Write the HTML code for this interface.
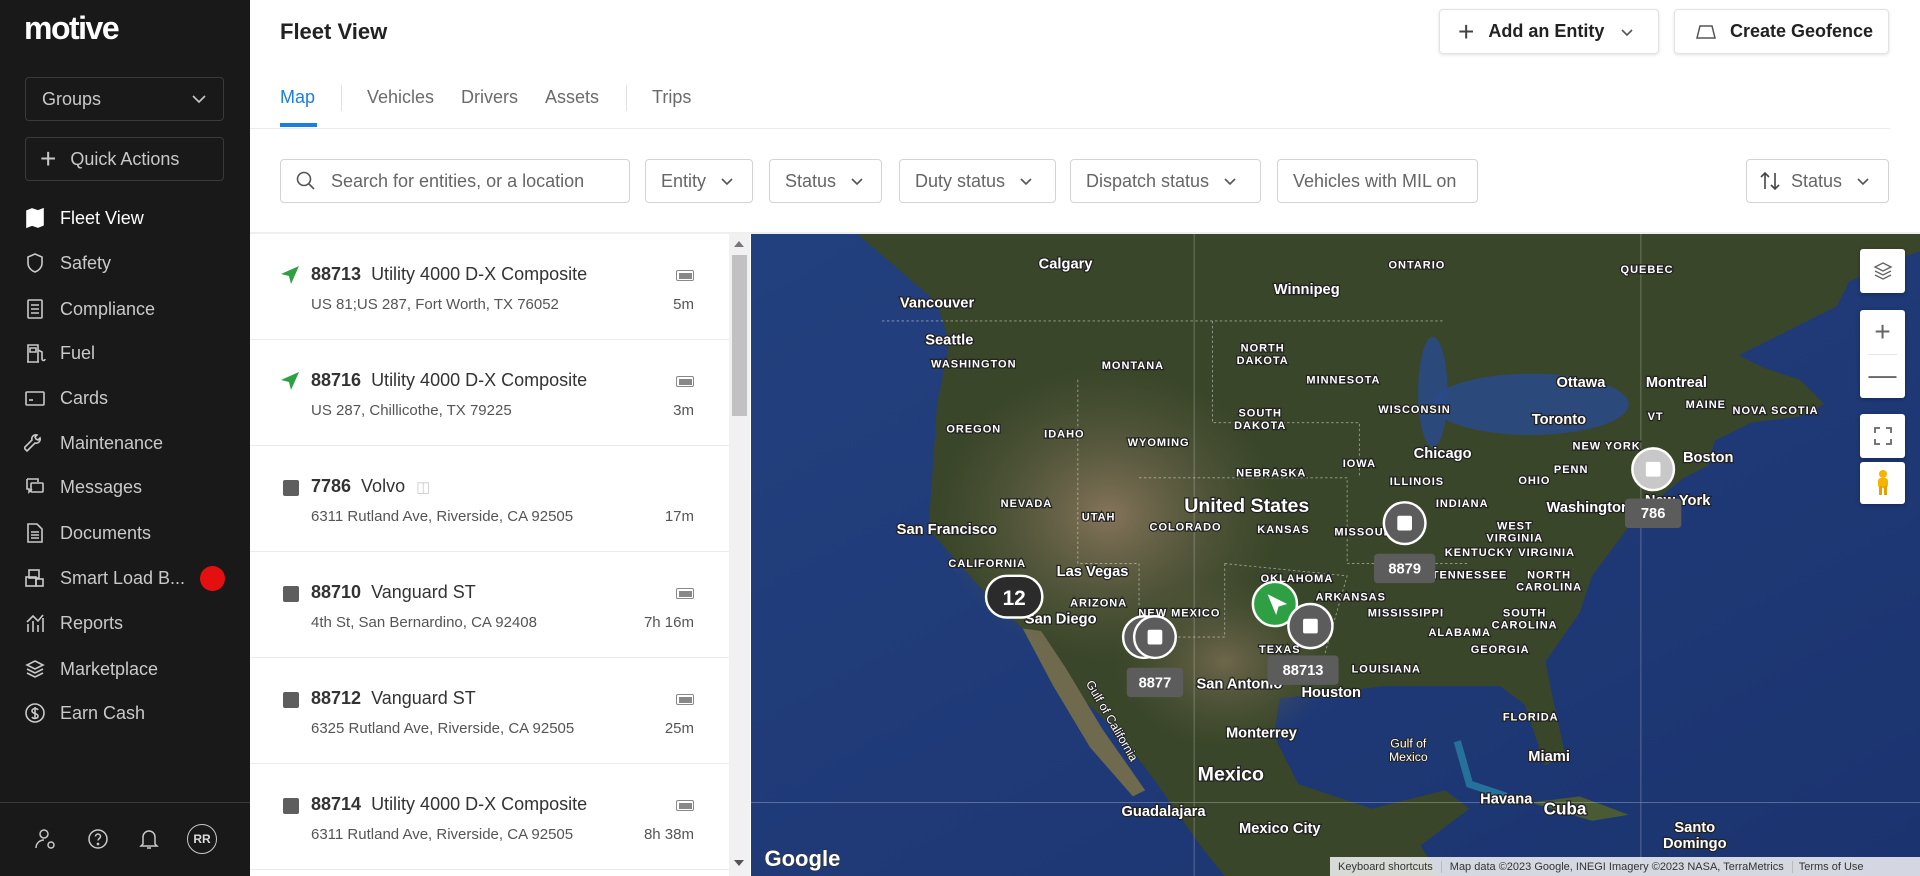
<!DOCTYPE html>
<html><head><meta charset="utf-8">
<style>
*{box-sizing:border-box;margin:0;padding:0}
body{width:1920px;height:876px;overflow:hidden;background:#fff;font-family:"Liberation Sans",sans-serif;position:relative;color:#222}
.abs{position:absolute}
#sb{left:0;top:0;width:250px;height:876px;background:#191919;color:#cfcfcf}
.box{position:absolute;left:25px;width:199px;height:44px;border:1px solid #3a3a3a;border-radius:4px;color:#c8c8c8;font-size:18px;display:flex;align-items:center}
.nav{position:absolute;left:24px;height:30px;display:flex;align-items:center;font-size:18px;color:#c9c9c9}
.nav svg{width:22px;height:22px;margin-right:14px;fill:none;stroke:#c9c9c9;stroke-width:1.6}
.btn{position:absolute;top:9px;height:45px;border:1px solid #e2e2e2;border-radius:4px;box-shadow:0 1px 3px rgba(0,0,0,.12);display:flex;align-items:center;font-size:18px;font-weight:bold;color:#222}
.tab{position:absolute;top:87px;font-size:18px;color:#6b6b6b}
.flt{position:absolute;top:159px;height:44px;border:1px solid #d4d4d4;border-radius:4px;display:flex;align-items:center;font-size:18px;color:#666;padding-left:15px}
.chev{width:14px;height:14px;fill:none;stroke:#555;stroke-width:1.6;margin-left:14px}
.row{position:absolute;left:250px;width:479px;height:106px;border-bottom:1px solid #ececec}
.row .ic{position:absolute;left:33px;top:34px;width:16px;height:16px;border-radius:2px;background:#5e5e5e}
.row .t{position:absolute;left:61px;top:30px;font-size:18px;color:#333;white-space:nowrap}
.row .t b{margin-right:10px;color:#333}
.row .a{position:absolute;left:61px;top:62px;font-size:15px;color:#555}
.row .m{position:absolute;right:35px;top:62px;font-size:15px;color:#555}
.row .bat{position:absolute;right:35px;top:36px;width:18px;height:11px;border:1.5px solid #888;border-radius:2px}
.row .bat:after{content:"";position:absolute;left:1.5px;top:1.5px;right:1.5px;bottom:1.5px;background:#888}
.mc{position:absolute;left:1860px;width:45px;background:#fff;border-radius:3px;box-shadow:0 1px 4px rgba(0,0,0,.3)}
</style></head><body>

<div id="sb" class="abs">
 <div class="abs" style="left:24px;top:10px;font-size:32px;font-weight:bold;color:#fff;letter-spacing:-1.5px">motive</div>
 <div class="box" style="top:77px;padding-left:16px">Groups<svg style="position:absolute;right:16px;width:16px;height:16px;fill:none;stroke:#c8c8c8;stroke-width:1.6" viewBox="0 0 16 16"><path d="M2 5l6 6 6-6"/></svg></div>
 <div class="box" style="top:137px;padding-left:14px"><span style="font-size:28px;font-weight:300;margin-right:14px;line-height:1">+</span>Quick Actions</div>
 <div class="nav" style="top:203px;color:#fff"><svg viewBox="0 0 22 22" style="fill:#fff;stroke:#fff"><path d="M3 4l5-2 6 2 5-2v16l-5 2-6-2-5 2z"/></svg>Fleet View</div>
 <div class="nav" style="top:248px"><svg viewBox="0 0 22 22"><path d="M11 2l7 3v6c0 5-4 8-7 9-3-1-7-4-7-9V5z"/></svg>Safety</div>
 <div class="nav" style="top:294px"><svg viewBox="0 0 22 22"><rect x="4" y="2" width="14" height="18" rx="1"/><path d="M7 7h8M7 11h8M7 15h8"/></svg>Compliance</div>
 <div class="nav" style="top:338px"><svg viewBox="0 0 22 22"><path d="M4 20V3h10v17M3 20h12M14 8l4 2v7a1.5 1.5 0 003 0"/><path d="M6 6h6v4H6z"/></svg>Fuel</div>
 <div class="nav" style="top:383px"><svg viewBox="0 0 22 22"><rect x="2" y="5" width="18" height="13" rx="1"/><path d="M5 13h4"/></svg>Cards</div>
 <div class="nav" style="top:428px"><svg viewBox="0 0 22 22"><path d="M3 19l8-8a4 4 0 005-5l-2 2-2-1-1-2 2-2a4 4 0 00-5 5l-8 8z"/></svg>Maintenance</div>
 <div class="nav" style="top:472px"><svg viewBox="0 0 22 22"><path d="M3 3h11v3M3 3v10h2v3l3-3"/><rect x="7" y="7" width="12" height="9" rx="1"/></svg>Messages</div>
 <div class="nav" style="top:518px"><svg viewBox="0 0 22 22"><path d="M4 2h9l5 5v13H4z M7 10h8M7 13h8M7 16h8"/></svg>Documents</div>
 <div class="nav" style="top:563px"><svg viewBox="0 0 22 22"><rect x="5" y="3" width="10" height="8"/><rect x="2" y="10" width="10" height="9"/><rect x="12" y="12" width="7" height="7"/></svg>Smart Load B...</div>
 <div class="abs" style="left:200px;top:566px;width:25px;height:25px;border-radius:50%;background:#e41010"></div>
 <div class="nav" style="top:608px"><svg viewBox="0 0 22 22"><path d="M4 20v-8M9 20v-11M14 20v-7M19 20V6M3 10l6-6 5 5 5-6"/></svg>Reports</div>
 <div class="nav" style="top:654px"><svg viewBox="0 0 22 22"><path d="M11 3l8 4-8 4-8-4z M3 11l8 4 8-4 M3 15l8 4 8-4"/></svg>Marketplace</div>
 <div class="nav" style="top:698px"><svg viewBox="0 0 22 22"><circle cx="11" cy="11" r="9"/><path d="M14 8c-1-2-6-2-6 1s6 2 6 5-5 3-6 1M11 5v12"/></svg>Earn Cash</div>
 <div class="abs" style="left:0;top:802px;width:250px;height:1px;background:#3a3a3a"></div>
 <svg class="abs" style="left:34px;top:827px" width="24" height="24" viewBox="0 0 24 24" fill="none" stroke="#c9c9c9" stroke-width="1.5"><circle cx="10" cy="7" r="4"/><path d="M2 21c0-5 4-8 8-8"/><circle cx="17" cy="18" r="3"/></svg>
 <svg class="abs" style="left:86px;top:827px" width="24" height="24" viewBox="0 0 24 24" fill="none" stroke="#c9c9c9" stroke-width="1.5"><circle cx="12" cy="12" r="9"/><path d="M9.5 9.5a2.5 2.5 0 115 0c0 2-2.5 2-2.5 4"/><circle cx="12" cy="17" r=".6"/></svg>
 <svg class="abs" style="left:137px;top:827px" width="24" height="24" viewBox="0 0 24 24" fill="none" stroke="#c9c9c9" stroke-width="1.5"><path d="M6 17V10a6 6 0 0112 0v7l2 2H4zM10 21h4"/></svg>
 <div class="abs" style="left:187px;top:824px;width:30px;height:30px;border:1.5px solid #c9c9c9;border-radius:50%;font-size:12px;font-weight:bold;color:#ddd;display:flex;align-items:center;justify-content:center">RR</div>
</div>

<div class="abs" style="left:280px;top:19px;font-size:22px;font-weight:bold;color:#222">Fleet View</div>
<div class="btn" style="left:1439px;width:220px;padding-left:18px"><span style="font-size:28px;font-weight:300;margin-right:14px;color:#444">+</span>Add an Entity<svg class="chev" viewBox="0 0 14 14" style="margin-left:16px"><path d="M2 5l5 5 5-5"/></svg></div>
<div class="btn" style="left:1674px;width:215px;padding-left:20px"><svg width="22" height="16" viewBox="0 0 22 16" fill="none" stroke="#555" stroke-width="1.5" style="margin-right:13px"><path d="M5 2h12l3 12H2z"/></svg>Create Geofence</div>

<div class="tab" style="left:280px;color:#1b7ee0">Map</div>
<div class="abs" style="left:280px;top:123px;width:37px;height:4px;background:#1b7ee0"></div>
<div class="abs" style="left:341px;top:85px;width:1px;height:26px;background:#e2e2e2"></div>
<div class="tab" style="left:367px">Vehicles</div>
<div class="tab" style="left:461px">Drivers</div>
<div class="tab" style="left:545px">Assets</div>
<div class="abs" style="left:626px;top:85px;width:1px;height:26px;background:#e2e2e2"></div>
<div class="tab" style="left:652px">Trips</div>
<div class="abs" style="left:250px;top:128px;width:1640px;height:1px;background:#ececec"></div>

<div class="flt" style="left:280px;width:350px"><svg width="20" height="20" viewBox="0 0 20 20" fill="none" stroke="#555" stroke-width="1.6" style="margin-right:15px"><circle cx="8" cy="8" r="6.5"/><path d="M13 13l5 5"/></svg>Search for entities, or a location</div>
<div class="flt" style="left:645px;width:108px">Entity<svg class="chev" viewBox="0 0 14 14"><path d="M2 5l5 5 5-5"/></svg></div>
<div class="flt" style="left:769px;width:113px">Status<svg class="chev" viewBox="0 0 14 14"><path d="M2 5l5 5 5-5"/></svg></div>
<div class="flt" style="left:899px;width:157px">Duty status<svg class="chev" viewBox="0 0 14 14"><path d="M2 5l5 5 5-5"/></svg></div>
<div class="flt" style="left:1070px;width:191px">Dispatch status<svg class="chev" viewBox="0 0 14 14"><path d="M2 5l5 5 5-5"/></svg></div>
<div class="flt" style="left:1277px;width:201px">Vehicles with MIL on</div>
<div class="flt" style="left:1746px;width:143px;padding-left:12px"><svg width="22" height="20" viewBox="0 0 22 20" fill="none" stroke="#444" stroke-width="1.6" style="margin-right:10px"><path d="M6 18V2M2 6l4-4 4 4M16 2v16M12 14l4 4 4-4"/></svg>Status<svg class="chev" viewBox="0 0 14 14"><path d="M2 5l5 5 5-5"/></svg></div>

<div class="abs" style="left:250px;top:232px;width:1670px;height:2px;background:#efefef"></div>

<div class="row" style="top:234px"><svg class="abs" style="left:30px;top:31px" width="20" height="20" viewBox="0 0 20 20"><path d="M19 1L1 9l8 2 2 8z" fill="#2ea043"/></svg><div class="t"><b>88713</b>Utility 4000 D-X Composite</div><div class="a">US 81;US 287, Fort Worth, TX 76052</div><div class="bat"></div><div class="m">5m</div></div>
<div class="row" style="top:340px"><svg class="abs" style="left:30px;top:31px" width="20" height="20" viewBox="0 0 20 20"><path d="M19 1L1 9l8 2 2 8z" fill="#2ea043"/></svg><div class="t"><b>88716</b>Utility 4000 D-X Composite</div><div class="a">US 287, Chillicothe, TX 79225</div><div class="bat"></div><div class="m">3m</div></div>
<div class="row" style="top:446px"><div class="ic"></div><div class="t"><b>7786</b>Volvo <span style="color:#ccc;font-size:15px;margin-left:6px">&#9707;</span></div><div class="a">6311 Rutland Ave, Riverside, CA 92505</div><div class="m">17m</div></div>
<div class="row" style="top:552px"><div class="ic"></div><div class="t"><b>88710</b>Vanguard ST</div><div class="a">4th St, San Bernardino, CA 92408</div><div class="bat"></div><div class="m">7h 16m</div></div>
<div class="row" style="top:658px"><div class="ic"></div><div class="t"><b>88712</b>Vanguard ST</div><div class="a">6325 Rutland Ave, Riverside, CA 92505</div><div class="bat"></div><div class="m">25m</div></div>
<div class="row" style="top:764px"><div class="ic"></div><div class="t"><b>88714</b>Utility 4000 D-X Composite</div><div class="a">6311 Rutland Ave, Riverside, CA 92505</div><div class="bat"></div><div class="m">8h 38m</div></div>

<div class="abs" style="left:729px;top:234px;width:21px;height:642px;background:#f1f1f1"></div>
<div class="abs" style="left:732px;top:255px;width:15px;height:161px;background:#c1c1c1"></div>
<div class="abs" style="left:734px;top:241px;width:0;height:0;border-left:5px solid transparent;border-right:5px solid transparent;border-bottom:6px solid #777"></div>
<div class="abs" style="left:734px;top:860px;width:0;height:0;border-left:5px solid transparent;border-right:5px solid transparent;border-top:6px solid #555"></div>

<svg class="abs" style="left:751px;top:234px" width="1169" height="642" viewBox="613 191 955 524" preserveAspectRatio="none" font-family="Liberation Sans, sans-serif">
<defs>
<radialGradient id="arid" cx="0.5" cy="0.5" r="0.5"><stop offset="0" stop-color="#85745a"/><stop offset="1" stop-color="#5d5e44" stop-opacity="0"/></radialGradient>
<linearGradient id="sea" x1="0" y1="0" x2="1" y2="1"><stop offset="0" stop-color="#23407e"/><stop offset="1" stop-color="#1b3470"/></linearGradient>
</defs>
<rect x="613" y="191" width="955" height="524" fill="url(#sea)"/>
<path d="M700 191 L765 247 L775 280 L765 330 L758 432 L808 488 L835 513 L873 560 L915 600 L945 640 L980 690 L1000 715 L1175 715 L1160 690 L1200 660 L1180 645 L1120 660 L1060 640 L1040 600 L1045 570 L1088 565 L1130 560 L1175 560 L1225 560 L1245 575 L1262 625 L1278 615 L1268 570 L1262 540 L1290 500 L1300 470 L1330 430 L1350 410 L1375 390 L1395 380 L1400 360 L1430 345 L1470 340 L1490 330 L1470 310 L1440 300 L1420 290 L1500 250 L1510 230 L1540 215 L1568 205 L1568 191 Z" fill="#3a4629"/>
<path d="M835 513 L860 560 L890 610 L925 650 L935 645 L900 595 L870 545 L850 515 Z" fill="#6f6a4e"/>
<ellipse cx="905" cy="420" rx="140" ry="120" fill="url(#arid)"/>
<ellipse cx="1000" cy="540" rx="90" ry="70" fill="url(#arid)" opacity=".7"/>
<ellipse cx="1250" cy="330" rx="80" ry="25" fill="#2a4a8a" opacity=".85"/>
<ellipse cx="1170" cy="320" rx="12" ry="45" fill="#2a4a8a" opacity=".85"/>
<path d="M1250 655 L1290 650 L1330 665 L1300 670 Z" fill="#4a5a34"/>
<path d="M1190 605 L1200 640 L1230 650" stroke="#2fa9c4" stroke-width="6" fill="none" opacity=".5"/>
<g stroke="#fff" stroke-opacity=".5" stroke-dasharray="2 2" stroke-width=".7" fill="none">
<path d="M720 262 L1180 262"/><path d="M990 262 L990 345 L1110 345 L1110 390"/><path d="M880 310 L880 460 L930 460 L930 520 L1000 520 L1000 460"/><path d="M930 390 L1100 390 L1100 460 L1200 460"/><path d="M1000 460 L1100 470 L1080 540"/>
</g>
<g stroke="#fff" stroke-opacity=".35" stroke-width=".6"><path d="M613 655 H1568 M975 191 V715 M1340 191 V715"/></g>
<g fill="#fff" stroke="#222" stroke-width="2" paint-order="stroke" font-weight="bold" text-anchor="middle">
<g font-size="12">
<text x="870" y="219">Calgary</text><text x="765" y="251">Vancouver</text><text x="775" y="281">Seattle</text><text x="1067" y="240">Winnipeg</text>
<text x="1291" y="316">Ottawa</text><text x="1369" y="316">Montreal</text><text x="1273" y="346">Toronto</text><text x="1178" y="374">Chicago</text>
<text x="1395" y="377">Boston</text><text x="1370" y="412">New York</text><text x="1297" y="418">Washington</text><text x="773" y="436">San Francisco</text>
<text x="892" y="470">Las Vegas</text><text x="866" y="509">San Diego</text><text x="1012" y="562">San Antonio</text><text x="1087" y="569">Houston</text>
<text x="1030" y="602">Monterrey</text><text x="1265" y="621">Miami</text><text x="1230" y="656">Havana</text><text x="950" y="666">Guadalajara</text>
<text x="1045" y="680">Mexico City</text><text x="1384" y="679">Santo</text><text x="1384" y="692">Domingo</text>
</g>
<g font-size="16"><text x="1018" y="418">United States</text><text x="1005" y="637">Mexico</text><text x="1278" y="665" font-size="14">Cuba</text></g>
<g font-size="9" letter-spacing=".8">
<text x="795" y="300">WASHINGTON</text><text x="925" y="301">MONTANA</text><text x="1031" y="287">NORTH</text><text x="1031" y="297">DAKOTA</text><text x="1097" y="313">MINNESOTA</text>
<text x="1157" y="219">ONTARIO</text><text x="1345" y="223">QUEBEC</text><text x="1393" y="333">MAINE</text><text x="1450" y="338">NOVA SCOTIA</text><text x="1352" y="343">VT</text>
<text x="795" y="353">OREGON</text><text x="869" y="357">IDAHO</text><text x="946" y="364">WYOMING</text><text x="1029" y="340">SOUTH</text><text x="1029" y="350">DAKOTA</text>
<text x="1155" y="337">WISCONSIN</text><text x="1038" y="389">NEBRASKA</text><text x="1110" y="381">IOWA</text><text x="1312" y="367">NEW YORK</text>
<text x="838" y="414">NEVADA</text><text x="897" y="425">UTAH</text><text x="968" y="433">COLORADO</text><text x="1048" y="435">KANSAS</text><text x="1157" y="396">ILLINOIS</text>
<text x="1194" y="414">INDIANA</text><text x="1253" y="395">OHIO</text><text x="1283" y="386">PENN</text><text x="1115" y="437">MISSOURI</text><text x="1237" y="432">WEST</text><text x="1237" y="442">VIRGINIA</text>
<text x="1208" y="454">KENTUCKY</text><text x="1263" y="454">VIRGINIA</text><text x="806" y="463">CALIFORNIA</text><text x="1200" y="472">TENNESSEE</text><text x="1265" y="472">NORTH</text><text x="1265" y="482">CAROLINA</text>
<text x="1059" y="475">OKLAHOMA</text><text x="897" y="495">ARIZONA</text><text x="1103" y="490">ARKANSAS</text><text x="963" y="503">NEW MEXICO</text><text x="1148" y="503">MISSISSIPPI</text>
<text x="1245" y="503">SOUTH</text><text x="1245" y="513">CAROLINA</text><text x="1192" y="519">ALABAMA</text><text x="1225" y="533">GEORGIA</text><text x="1045" y="533">TEXAS</text><text x="1132" y="549">LOUISIANA</text><text x="1250" y="588">FLORIDA</text>
</g>
<g font-size="10" font-weight="normal" stroke-width="1.5"><text x="1150" y="610">Gulf of</text><text x="1150" y="621">Mexico</text><text x="905" y="590" transform="rotate(60 905 590)">Gulf of California</text></g>
</g>
<rect x="805" y="470" width="46" height="34" rx="17" fill="#2b2b2b" stroke="#fff" stroke-width="2"/>
<text x="828" y="494" fill="#fff" font-size="17" font-weight="bold" text-anchor="middle">12</text>
<circle cx="934" cy="520" r="17" fill="#5c5c5c" stroke="#fff" stroke-width="2"/>
<circle cx="943" cy="520" r="17" fill="#5c5c5c" stroke="#fff" stroke-width="2"/>
<rect x="937" y="514" width="12" height="12" rx="1.5" fill="#fff"/>
<rect x="920" y="545" width="46" height="24" rx="3" fill="#5c5c5c"/><text x="943" y="561" fill="#fff" font-size="12" font-weight="bold" text-anchor="middle">8877</text>
<circle cx="1041" cy="493" r="18" fill="#2ea043" stroke="#fff" stroke-width="2"/>
<path d="M1035 485 L1051 493 L1044 495 L1042 502 Z" fill="#fff"/>
<circle cx="1070" cy="511" r="18" fill="#5c5c5c" stroke="#fff" stroke-width="2"/>
<rect x="1064" y="505" width="12" height="12" rx="1.5" fill="#fff"/>
<rect x="1035" y="535" width="58" height="24" rx="3" fill="#5c5c5c"/><text x="1064" y="551" fill="#fff" font-size="12" font-weight="bold" text-anchor="middle">88713</text>
<circle cx="1147" cy="427" r="17" fill="#5c5c5c" stroke="#fff" stroke-width="2"/>
<rect x="1141" y="421" width="12" height="12" rx="1.5" fill="#fff"/>
<rect x="1122" y="452" width="50" height="24" rx="3" fill="#5c5c5c"/><text x="1147" y="468" fill="#fff" font-size="12" font-weight="bold" text-anchor="middle">8879</text>
<circle cx="1350" cy="383" r="17" fill="#c8c8c8" stroke="#fff" stroke-width="2"/>
<rect x="1344" y="377" width="12" height="12" rx="1.5" fill="#fff"/>
<rect x="1327" y="407" width="46" height="24" rx="3" fill="#5c5c5c"/><text x="1350" y="423" fill="#fff" font-size="12" font-weight="bold" text-anchor="middle">786</text>
<text x="624" y="707" fill="#fff" font-size="18" font-weight="bold" stroke="#333" stroke-width="1" paint-order="stroke">Google</text>
</svg>

<div class="mc" style="top:249px;height:44px;display:flex;align-items:center;justify-content:center"><svg width="22" height="22" viewBox="0 0 22 22" fill="none" stroke="#666" stroke-width="1.4"><path d="M11 3l8 4-8 4-8-4z M3 11l8 4 8-4 M3 15l8 4 8-4"/></svg></div>
<div class="mc" style="top:310px;height:88px"><div style="height:44px;text-align:center;font-size:28px;line-height:44px;color:#666;font-weight:300">+</div><div style="margin:0 8px;height:1px;background:#e6e6e6"></div><div style="height:43px;text-align:center;font-size:28px;line-height:40px;color:#666;font-weight:300">&#8212;</div></div>
<div class="mc" style="top:414px;height:44px;display:flex;align-items:center;justify-content:center"><svg width="20" height="20" viewBox="0 0 20 20" fill="none" stroke="#666" stroke-width="1.8"><path d="M2 7V2h5M13 2h5v5M18 13v5h-5M7 18H2v-5"/></svg></div>
<div class="mc" style="top:462px;height:42px;display:flex;align-items:center;justify-content:center"><svg width="16" height="28" viewBox="0 0 16 28"><circle cx="8" cy="5" r="4" fill="#f4b400"/><rect x="3" y="9" width="10" height="10" rx="3" fill="#f4b400"/><rect x="4" y="17" width="3" height="9" fill="#e6a100"/><rect x="9" y="17" width="3" height="9" fill="#e6a100"/></svg></div>

<div class="abs" style="left:1330px;top:857px;width:590px;height:19px;background:rgba(245,245,245,.85);font-size:11px;color:#333;display:flex;align-items:center;white-space:nowrap">
<span style="padding:0 8px">Keyboard shortcuts</span><span style="padding:0 8px;border-left:1px solid #bbb">Map data ©2023 Google, INEGI Imagery ©2023 NASA, TerraMetrics</span><span style="padding:0 6px;border-left:1px solid #bbb">Terms of Use</span></div>
</body></html>
